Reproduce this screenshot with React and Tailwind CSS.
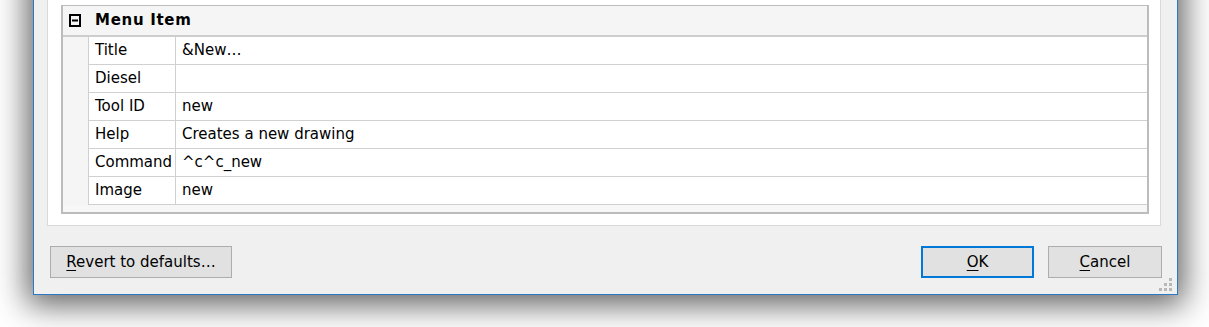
const rows = [
  { label: 'Title', value: '&New…' },
  { label: 'Diesel', value: '' },
  { label: 'Tool ID', value: 'new' },
  { label: 'Help', value: 'Creates a new drawing' },
  { label: 'Command', value: '^c^c_new' },
  { label: 'Image', value: 'new' },
];

function CollapseBox() {
  return (
    <svg width="12" height="13" viewBox="0 0 12 13" className="shrink-0">
      <rect x="1" y="1" width="10" height="11" fill="none" stroke="#000" strokeWidth="2" />
      <rect x="3" y="5.5" width="6" height="2" fill="#000" />
    </svg>
  );
}

function Grip() {
  return (
    <svg width="14" height="14" viewBox="0 0 14 14" className="absolute right-[4px] bottom-[2px]">
      <rect x="10" y="0" width="3" height="3" fill="#b8b8b8" />
      <rect x="5" y="5" width="3" height="3" fill="#b8b8b8" />
      <rect x="10" y="5" width="3" height="3" fill="#b8b8b8" />
      <rect x="0" y="10" width="3" height="3" fill="#b8b8b8" />
      <rect x="5" y="10" width="3" height="3" fill="#b8b8b8" />
      <rect x="10" y="10" width="3" height="3" fill="#b8b8b8" />
    </svg>
  );
}

function Button({ children, primary, className = '' }) {
  return (
    <button
      className={`h-[32px] flex items-center justify-center bg-[#e1e1e1] text-black ${
        primary ? 'border-2 border-[#0078d7]' : 'border border-[#adadad]'
      } ${className}`}
    >
      {children}
    </button>
  );
}

export default function App() {
  return (
    <div className="h-[327px] w-[1209px] overflow-hidden bg-white flex flex-col justify-end pl-[33px] pb-[32px] font-['DejaVu_Sans',sans-serif] text-[15px] text-black">
      <div className="relative w-[1145px] shrink-0 bg-[#f0f0f0] border border-[#2b79c4] border-t-0 shadow-[0_4px_30px_6px_rgba(0,0,0,0.62)]">
        {/* tab page */}
        <div className="ml-[13px] mr-[16px] bg-white border border-t-0 border-[#d9d9d9] pl-[13px] pr-[11px] pb-[11px]">
          <div className="h-[40px]" />
          {/* property grid */}
          <div className="border-2 border-t border-[#bcbcbe] bg-[#f7f7f7]">
            <div className="h-[31px] flex items-center bg-[#f5f5f5] border-b-2 border-[#cdcdcd]">
              <div className="w-[32px] flex pl-[6px]">
                <CollapseBox />
              </div>
              <span className="font-bold tracking-[0.7px]">Menu Item</span>
            </div>
            {rows.map((row) => (
              <div key={row.label} className="flex h-[28px]">
                <div className="w-[25px] bg-[#f5f5f5]" />
                <div className="flex-1 flex border-l border-b border-[#d0d0d0] bg-white">
                  <div className="w-[87px] flex items-center pl-[6px] border-r border-[#d0d0d0]">{row.label}</div>
                  <div className="flex-1 flex items-center pl-[6px]">{row.value}</div>
                </div>
              </div>
            ))}
            <div className="h-[7px]" />
          </div>
        </div>

        {/* buttons */}
        <div className="flex items-center pl-[16px] pr-[15px] pt-[20px] pb-[16px]">
          <Button className="w-[182px]">
            <span>
              <span className="underline underline-offset-[3px]">R</span>evert to defaults…
            </span>
          </Button>
          <div className="flex-1" />
          <Button primary className="w-[113px]">
            <span>
              <span className="underline underline-offset-[3px]">O</span>K
            </span>
          </Button>
          <Button className="w-[114px] ml-[14px]">
            <span>
              <span className="underline underline-offset-[3px]">C</span>ancel
            </span>
          </Button>
        </div>
        <Grip />
      </div>
    </div>
  );
}
